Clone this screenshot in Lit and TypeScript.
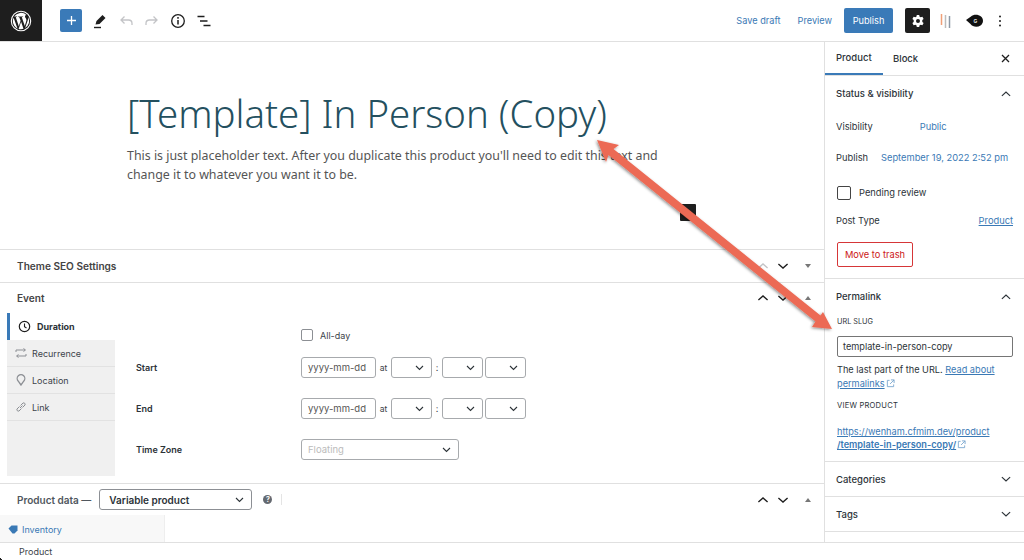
import { LitElement, html, css, svg } from 'lit';
import { customElement } from 'lit/decorators.js';

const chevUp = html`<svg width="24" height="24" viewBox="0 0 24 24"><path d="M6.500 14.500 12 9.500l5.500 5" fill="none" stroke="currentColor" stroke-width="1.600"/></svg>`;
const chevDown = html`<svg width="24" height="24" viewBox="0 0 24 24"><path d="M6.500 9.500 12 14.500l5.500-5" fill="none" stroke="currentColor" stroke-width="1.600"/></svg>`;
const ext = html`<svg class="ext" width="9" height="9" viewBox="0 0 10 10"><path d="M4 1.500H1.500v7h7V6M5.500 1H9v3.500M9 1 4.500 5.500" fill="none" stroke="#7ba7cf" stroke-width="1"/></svg>`;
const selectChev = html`<svg width="9" height="6" viewBox="0 0 9 6"><path d="M1 1l3.500 3.500L8 1" fill="none" stroke="#2c3338" stroke-width="1.100"/></svg>`;

@customElement('app-root')
export class AppRoot extends LitElement {
  static styles = css`
    :host {
      display: block;
      position: relative;
      width: 1024px;
      height: 560px;
      overflow: hidden;
      background: #fff;
      color: #1e1e1e;
      font-family: 'Inter', 'Liberation Sans', sans-serif;
      font-size: 10px;
    }
    a {
      color: #3a79b5;
      text-decoration: none;
    }
    .topbar {
      height: 41px;
      border-bottom: 1px solid #e0e0e0;
      display: flex;
      align-items: center;
    }
    .wp {
      width: 42px;
      height: 41px;
      background: #1e1e1e;
      display: flex;
      align-items: center;
      justify-content: center;
    }
    .tools {
      display: flex;
      align-items: center;
      margin-left: 18px;
      gap: 8px;
    }
    .add {
      width: 22px;
      height: 23px;
      background: #3a7ab8;
      border-radius: 2px;
      display: flex;
      align-items: center;
      justify-content: center;
      margin-right: 1px;
    }
    .tool {
      width: 18px;
      height: 18px;
      display: block;
    }
    .actions {
      margin-left: auto;
      margin-right: 22px;
      display: flex;
      align-items: center;
    }
    .actions a {
      font-size: 9.200px;
    }
    .save {
      margin-right: 17px;
    }
    .publish {
      margin-left: 12px;
      width: 49px;
      height: 25px;
      background: #3a7ab8;
      color: #fff;
      border-radius: 2px;
      display: flex;
      align-items: center;
      justify-content: center;
      font-size: 9.200px;
    }
    .gear {
      margin-left: 12px;
      width: 25px;
      height: 25px;
      background: #1e1e1e;
      border-radius: 2px;
      display: flex;
      align-items: center;
      justify-content: center;
    }
    .bars {
      margin-left: 10px;
    }
    .avatar {
      margin-left: 13px;
    }
    .more {
      margin-left: 13px;
    }
    .layout {
      display: flex;
      height: 519px;
    }
    .main {
      width: 824px;
      flex: none;
    }
    .editor {
      height: 208px;
      box-sizing: border-box;
      padding: 47px 0 0 127px;
      border-bottom: 1px solid #e0e0e0;
    }
    h1 {
      margin: 0;
      font-family: 'Noto Sans', 'Open Sans', sans-serif;
      font-weight: 300;
      font-size: 38.400px;
      line-height: 48px;
      color: #24505f;
      white-space: nowrap;
    }
    .lede {
      margin: 9px 0 0;
      width: 540px;
      font-family: 'Noto Sans', 'Open Sans', sans-serif;
      font-size: 12.400px;
      line-height: 19px;
      color: #555;
    }
    .box-head {
      display: flex;
      align-items: center;
      height: 33px;
      box-sizing: border-box;
      padding: 0 10px 0 17px;
      border-bottom: 1px solid #e0e0e0;
      font-weight: 600;
      font-size: 10.100px;
      color: #444;
    }
    .box-head.plain {
      height: 30px;
      border-bottom: 0;
    }
    .box-ctrl {
      margin-left: auto;
      display: flex;
      align-items: center;
      color: #1e1e1e;
    }
    .box-ctrl svg {
      display: block;
      width: 20px;
      height: 20px;
    }
    .box-ctrl .muted {
      color: #c3c4c7;
    }
    .tri {
      width: 0;
      height: 0;
      border-left: 3.500px solid transparent;
      border-right: 3.500px solid transparent;
      margin: 0 3px 0 12px;
    }
    .tri.down {
      border-top: 4.500px solid #777;
    }
    .tri.up {
      border-bottom: 4.500px solid #777;
    }
    .event {
      height: 201px;
      border-bottom: 1px solid #e0e0e0;
      box-sizing: border-box;
    }
    .event-body {
      display: flex;
      height: 163px;
      padding-left: 7px;
    }
    .tabs {
      width: 108px;
      flex: none;
      background: #f0f0f0;
      height: 163px;
    }
    .tab {
      height: 27px;
      box-sizing: border-box;
      display: flex;
      align-items: center;
      gap: 5px;
      padding-left: 8px;
      background: #f0f0f0;
      border-bottom: 1px solid #e2e2e2;
      font-size: 9px;
      color: #3c434a;
    }
    .tab.active {
      background: #fff;
      border-bottom: 0;
      border-left: 3px solid #3a7ab8;
      padding-left: 8px;
      font-weight: 700;
      color: #2c3338;
      gap: 6px;
    }
    .form {
      flex: 1;
      display: grid;
      grid-template-columns: 165px 1fr;
      grid-template-rows: 24px 41px 41px 41px;
      padding: 10px 0 0 21px;
      align-items: center;
      align-content: start;
      font-size: 9px;
      font-weight: 600;
      color: #2c3338;
    }
    .field {
      display: flex;
      align-items: center;
      font-weight: 400;
      color: #3c434a;
    }
    .allday {
      gap: 7px;
    }
    .small-check {
      width: 10px;
      height: 10px;
      border: 1px solid #8c8f94;
      border-radius: 2px;
    }
    .input,
    .sel {
      box-sizing: border-box;
      height: 21px;
      border: 1px solid #a7aaad;
      border-radius: 3px;
      display: flex;
      align-items: center;
      background: #fff;
    }
    .date {
      width: 75px;
      padding-left: 6px;
      font-size: 9.500px;
      color: #555;
    }
    .at {
      width: 15px;
      text-align: center;
      font-size: 8.500px;
    }
    .colon {
      width: 10px;
      text-align: center;
    }
    .sel {
      justify-content: flex-end;
      padding-right: 7px;
    }
    .t1 {
      width: 41px;
    }
    .t2 {
      width: 41px;
      margin-right: 2px;
    }
    .tz {
      width: 158px;
      justify-content: space-between;
      padding-left: 6px;
      color: #bbb;
      font-size: 9.500px;
    }
    .pd {
      height: 31px;
      display: flex;
      align-items: center;
      padding: 0 10px 0 17px;
      font-weight: 600;
      color: #50575e;
      font-size: 10px;
    }
    .pd-sel {
      margin-left: 8px;
      width: 153px;
      height: 21px;
      box-sizing: border-box;
      border: 1px solid #8c8f94;
      border-radius: 3px;
      padding: 0 7px 0 9px;
      display: flex;
      align-items: center;
      justify-content: space-between;
      font-size: 10px;
      color: #2c3338;
    }
    .help {
      margin-left: 11px;
      width: 9px;
      height: 9px;
      border-radius: 50%;
      background: #646970;
      color: #fff;
      font-size: 7px;
      font-weight: 700;
      text-align: center;
      line-height: 9px;
    }
    .sep {
      width: 1px;
      height: 11px;
      background: #e4e4e4;
      margin-left: 9px;
    }
    .pd-tabs {
      height: 28px;
      width: 165px;
      background: #f8f8f8;
      border-right: 1px solid #eee;
      box-sizing: border-box;
      display: flex;
      align-items: center;
      gap: 4px;
      padding-left: 8px;
      font-size: 9px;
      color: #3a79b5;
    }
    .footer {
      position: absolute;
      left: 0;
      right: 0;
      bottom: 0;
      height: 18px;
      box-sizing: border-box;
      border-top: 1px solid #e0e0e0;
      background: #fff;
      padding-left: 19px;
      display: flex;
      align-items: center;
      font-size: 9px;
      color: #3c434a;
    }
    .corner {
      position: absolute;
      left: 0;
      bottom: 0;
      width: 4px;
      height: 4px;
      background: radial-gradient(circle at 100% 0, transparent 4px, #1e1e1e 4px);
    }
    .side {
      width: 200px;
      flex: none;
      box-sizing: border-box;
      border-left: 1px solid #e0e0e0;
    }
    .side-tabs {
      height: 34px;
      box-sizing: border-box;
      display: flex;
      align-items: center;
      border-bottom: 1px solid #e0e0e0;
      font-size: 9.500px;
      font-weight: 500;
    }
    .side-tab {
      height: 33px;
      box-sizing: border-box;
      padding: 0 11px;
      display: flex;
      align-items: center;
      color: #2c3338;
    }
    .side-tab.on {
      width: 58px;
      border-bottom: 2px solid #3a7ab8;
    }
    .side-tab.block {
      padding-left: 10px;
    }
    .side-close {
      margin-left: auto;
      margin-right: 14px;
      display: block;
    }
    .panel {
      border-bottom: 1px solid #e0e0e0;
      padding: 0 11px;
    }
    .panel-head {
      display: flex;
      align-items: center;
      justify-content: space-between;
      height: 35px;
      font-size: 9.500px;
      font-weight: 500;
      color: #2c3338;
    }
    .panel-head.short {
      height: 34px;
    }
    .panel-head svg {
      width: 18px;
      height: 18px;
      margin-right: -2px;
      display: block;
    }
    .status {
      height: 203px;
      box-sizing: border-box;
    }
    .row {
      display: flex;
      align-items: center;
      height: 31px;
      font-size: 9.300px;
      color: #2c3338;
    }
    .row a {
      font-size: 9.300px;
    }
    .vis {
      margin-left: 47px;
    }
    .pub {
      margin-left: 13px;
      white-space: nowrap;
    }
    .pending {
      margin-top: 2px;
      gap: 8px;
      height: 35px;
    }
    .check {
      width: 12px;
      height: 12px;
      margin-left: 1px;
      border: 1px solid #444;
      border-radius: 2px;
    }
    .ptype {
      justify-content: space-between;
      height: 20px;
    }
    .ptype a {
      text-decoration: underline;
    }
    .trash {
      margin: 12px 0 0 1px;
      width: 76px;
      height: 25px;
      box-sizing: border-box;
      border: 1px solid #d63638;
      border-radius: 2px;
      color: #cc1818;
      font-size: 9.300px;
      display: flex;
      align-items: center;
      justify-content: center;
    }
    .perma {
      height: 183px;
      box-sizing: border-box;
    }
    .label {
      font-size: 7.600px;
      color: #2c3338;
      font-weight: 400;
      letter-spacing: 0.2px;
      line-height: 12px;
      margin-left: 1px;
    }
    .slug-label {
      margin-top: 2px;
      font-size: 7.300px;
      letter-spacing: 0;
    }
    .slug {
      box-sizing: border-box;
      margin: 8px 0 0 1px;
      height: 21px;
      width: 176px;
      border: 1px solid #757575;
      border-radius: 2px;
      padding-left: 5px;
      display: flex;
      align-items: center;
      font-size: 9.200px;
      color: #2c3338;
    }
    .help-text {
      margin: 6px 0 0 1px;
      font-size: 9.200px;
      line-height: 14px;
      color: #2c3338;
    }
    .help-text a,
    .url a {
      text-decoration: underline;
    }
    .ext {
      vertical-align: -1px;
      margin-left: 1px;
    }
    .view {
      margin-top: 9px;
    }
    .url {
      margin: 13px 0 0 1px;
      font-size: 9.200px;
      line-height: 13px;
    }
    .url b {
      font-weight: 600;
    }
    .overlay {
      position: absolute;
      left: 0;
      top: 0;
      pointer-events: none;
    }
    .blot {
      position: absolute;
      left: 680px;
      top: 204px;
      width: 16px;
      height: 17px;
      background: #1e1e1e;
      border-radius: 1px;
    }
  `;

  private dateRow() {
    return html`<div class="field">
      <div class="input date">yyyy-mm-dd</div>
      <span class="at">at</span>
      <div class="sel t1">${selectChev}</div>
      <span class="colon">:</span>
      <div class="sel t2">${selectChev}</div>
      <div class="sel t1">${selectChev}</div>
    </div>`;
  }

  render() {
    return html`
      <div class="topbar">
        <div class="wp">
          <svg width="22" height="22" viewBox="0 0 22 22">
            <circle cx="11" cy="11" r="9.700" fill="none" stroke="#fff" stroke-width="1.100" />
            <path
              d="M2.800 11c0 3.300 1.900 6.100 4.700 7.400L3.600 7.700A8.200 8.200 0 0 0 2.800 11Zm13.700-.4c0-1-.4-1.700-.7-2.300-.4-.7-.8-1.200-.8-1.900 0-.7.600-1.400 1.300-1.400h.2A8.200 8.200 0 0 0 4.100 6.500h.5c.9 0 2.200-.1 2.200-.1.400 0 .5.600 0 .7l-1 .1 3 9 1.800-5.500-1.300-3.500-.9-.1c-.5 0-.4-.7 0-.7 0 0 1.400.1 2.200.1.900 0 2.200-.1 2.200-.1.400 0 .5.600 0 .7l-1 .1 3 8.900.8-2.800c.4-1.100.6-1.900.6-2.600Zm-5.400 1.100-2.500 7.200a8.200 8.200 0 0 0 5-.1l-.1-.1-2.400-7Zm7-4.600.1.800c0 .8-.2 1.700-.6 2.900l-2.500 7.200a8.200 8.200 0 0 0 3-10.900Z"
              fill="#fff"
            />
          </svg>
        </div>
        <div class="tools">
          <div class="add">
            <svg width="11" height="11" viewBox="0 0 11 11"><path d="M5.500 1v9M1 5.500h9" stroke="#fff" stroke-width="1.300" /></svg>
          </div>
          <svg class="tool" viewBox="0 0 18 18">
            <path d="M4.500 12.500 5.500 9 11.500 3l3 3-6 6Z" fill="#1e1e1e" />
            <path d="M3 15.500h7" stroke="#1e1e1e" stroke-width="1.400" />
          </svg>
          <svg class="tool" viewBox="0 0 18 18">
            <path d="M15 13v-1.500c0-2-1.500-3.500-3.500-3.500H4M7.500 4.500 4 8l3.500 3.500" fill="none" stroke="#c3c4c7" stroke-width="1.300" />
          </svg>
          <svg class="tool" viewBox="0 0 18 18">
            <path d="M3 13v-1.500C3 9.500 4.500 8 6.500 8H14M10.500 4.500 14 8l-3.500 3.500" fill="none" stroke="#c3c4c7" stroke-width="1.300" />
          </svg>
          <svg class="tool" viewBox="0 0 18 18">
            <circle cx="9" cy="9" r="6.300" fill="none" stroke="#1e1e1e" stroke-width="1.300" />
            <path d="M9 8v4.500" stroke="#1e1e1e" stroke-width="1.500" />
            <path d="M9 5v1.700" stroke="#1e1e1e" stroke-width="1.500" />
          </svg>
          <svg class="tool" viewBox="0 0 18 18">
            <path d="M2.500 4.500h7M5 9h7.500M8.500 13.500h7" stroke="#1e1e1e" stroke-width="1.400" />
          </svg>
        </div>
        <div class="actions">
          <a class="save" href="#">Save draft</a>
          <a href="#">Preview</a>
          <div class="publish">Publish</div>
          <div class="gear">
            <svg width="14" height="14" viewBox="0 0 14 14">
              <path
                d="M5.800 1h2.400l.4 1.700 1.100.6 1.700-.5 1.200 2.100-1.300 1.200v1.800l1.300 1.200-1.200 2.100-1.700-.5-1.100.6L8.200 13H5.800l-.4-1.700-1.100-.6-1.700.5-1.200-2.100 1.300-1.200V6.100L1.400 4.900l1.200-2.100 1.700.5 1.100-.6Z"
                fill="#fff"
              />
              <circle cx="7" cy="7" r="2" fill="#1e1e1e" />
            </svg>
          </div>
          <svg class="bars" width="12" height="16" viewBox="0 0 12 16">
            <path d="M1.500 1v11" stroke="#f0a078" stroke-width="1.500" />
            <path d="M5.500 2v13" stroke="#bdbdbd" stroke-width="1.500" />
            <path d="M9.500 3v12" stroke="#8d99a6" stroke-width="1.500" />
          </svg>
          <svg class="avatar" width="20" height="16" viewBox="0 0 20 16">
            <path d="M1 7 6 3.500C8 1.500 13 1 16 3.500c3 2.500 2.500 7-.5 9-3 2-8 1.500-10-1.500Z" fill="#111" />
            <text x="10.500" y="10" font-size="5" fill="#ddd" text-anchor="middle" font-family="Inter" font-weight="700">G</text>
          </svg>
          <svg class="more" width="4" height="14" viewBox="0 0 4 14">
            <circle cx="2" cy="2.500" r="1" fill="#1e1e1e" />
            <circle cx="2" cy="7" r="1" fill="#1e1e1e" />
            <circle cx="2" cy="11.500" r="1" fill="#1e1e1e" />
          </svg>
        </div>
      </div>

      <div class="layout">
        <div class="main">
          <div class="editor">
            <h1>[Template] In Person (Copy)</h1>
            <p class="lede">
              This is just placeholder text. After you duplicate this product you'll need to edit this text and
              change it to whatever you want it to be.
            </p>
          </div>
          <div class="box-head">
            Theme SEO Settings
            <div class="box-ctrl">
              <span class="muted">${chevUp}</span>${chevDown}
              <div class="tri down"></div>
            </div>
          </div>
          <div class="event">
            <div class="box-head plain">
              Event
              <div class="box-ctrl">
                ${chevUp}${chevDown}
                <div class="tri up"></div>
              </div>
            </div>
            <div class="event-body">
              <div class="tabs">
                <div class="tab active">
                  <svg width="13" height="13" viewBox="0 0 13 13">
                    <circle cx="6.500" cy="6.500" r="5.200" fill="none" stroke="#1e1e1e" stroke-width="1.200" />
                    <path d="M6.500 3.500v3.200l2 1.300" fill="none" stroke="#1e1e1e" stroke-width="1.100" />
                  </svg>
                  Duration
                </div>
                <div class="tab">
                  <svg width="12" height="10" viewBox="0 0 12 10">
                    <path d="M1 4V2h9M8.500.5 10.500 2 8.500 3.500M11 6v2H2M3.500 6.500 1.500 8l2 1.500" fill="none" stroke="#8c8f94" stroke-width="1" />
                  </svg>
                  Recurrence
                </div>
                <div class="tab">
                  <svg width="12" height="12" viewBox="0 0 12 12">
                    <path d="M6 11 3.300 7.200A3.800 3.800 0 1 1 8.700 7.200Z" fill="none" stroke="#8c8f94" stroke-width="1.300" />
                  </svg>
                  Location
                </div>
                <div class="tab">
                  <svg width="12" height="12" viewBox="0 0 12 12">
                    <path d="M5 7 7.500 4.500M4.500 5.500 2 8a1.500 1.500 0 0 0 2 2l2.500-2.500M5.500 4.500 8 2a1.500 1.500 0 0 1 2 2L7.500 6.500" fill="none" stroke="#8c8f94" stroke-width="1" />
                  </svg>
                  Link
                </div>
              </div>
              <div class="form">
                <span></span>
                <div class="field allday">
                  <div class="small-check"></div>
                  All-day
                </div>
                <span>Start</span>
                ${this.dateRow()}
                <span>End</span>
                ${this.dateRow()}
                <span>Time Zone</span>
                <div class="field">
                  <div class="input sel tz">Floating ${selectChev}</div>
                </div>
              </div>
            </div>
          </div>
          <div class="pd">
            Product data —
            <div class="pd-sel">Variable product ${selectChev}</div>
            <div class="help">?</div>
            <div class="sep"></div>
            <div class="box-ctrl">
              ${chevUp}${chevDown}
              <div class="tri up"></div>
            </div>
          </div>
          <div class="pd-tabs">
            <svg width="10" height="9" viewBox="0 0 10 9">
              <path d="M.5 3.500 3.500.5h6v5l-3 3h-2Z" fill="#3a79b5" />
            </svg>
            Inventory
          </div>
        </div>

        <aside class="side">
          <div class="side-tabs">
            <div class="side-tab on">Product</div>
            <div class="side-tab block">Block</div>
            <svg class="side-close" width="9" height="9" viewBox="0 0 9 9">
              <path d="M1 1l7 7M8 1 1 8" stroke="#1e1e1e" stroke-width="1.300" />
            </svg>
          </div>
          <div class="panel status">
            <div class="panel-head">Status &amp; visibility ${chevUp}</div>
            <div class="row">Visibility <a class="vis" href="#">Public</a></div>
            <div class="row">Publish <a class="pub" href="#">September 19, 2022 2:52 pm</a></div>
            <div class="row pending"><div class="check"></div>Pending review</div>
            <div class="row ptype">Post Type <a href="#">Product</a></div>
            <div class="trash">Move to trash</div>
          </div>
          <div class="panel perma">
            <div class="panel-head">Permalink ${chevUp}</div>
            <div class="label slug-label">URL SLUG</div>
            <div class="slug">template-in-person-copy</div>
            <p class="help-text">
              The last part of the URL. <a href="#">Read about</a><br /><a href="#">permalinks</a>${ext}
            </p>
            <div class="label view">VIEW PRODUCT</div>
            <div class="url">
              <a href="#">https://wenham.cfmim.dev/product<br /><b>/template-in-person-copy/</b></a>${ext}
            </div>
          </div>
          <div class="panel"><div class="panel-head short">Categories ${chevDown}</div></div>
          <div class="panel"><div class="panel-head short">Tags ${chevDown}</div></div>
        </aside>
      </div>

      <div class="footer">Product<div class="corner"></div></div>
      <div class="blot"></div>
      <svg class="overlay" width="1024" height="560" viewBox="0 0 1024 560">
        <defs>
          <filter id="sh" x="-10%" y="-10%" width="120%" height="120%">
            <feDropShadow dx="-1" dy="1" stdDeviation="1.500" flood-color="#000" flood-opacity="0.45" />
          </filter>
        </defs>
        ${svg`<path filter="url(#sh)" fill="#ec6a55" d="M597 140 619 145 613.500 149 820.500 315.500 823 312 832 329 812 327 815.500 321.600 608.500 155 606 162Z" />`}
      </svg>
    `;
  }
}
